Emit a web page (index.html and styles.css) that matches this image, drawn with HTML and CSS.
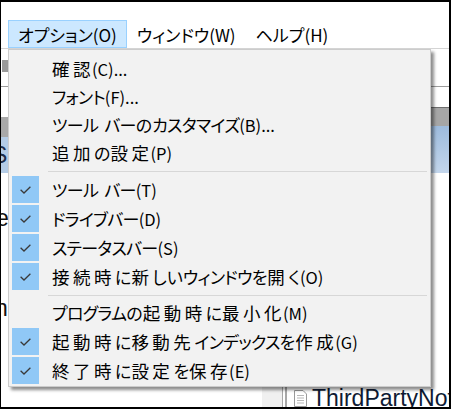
FILE: index.html
```html
<!DOCTYPE html>
<html lang="ja">
<head>
<meta charset="utf-8">
<title>オプション</title>
<link rel="stylesheet" href="styles.css">
</head>
<body>
<div class="frame">
  <div class="titlegap"></div>
  <div class="menubar">
    <div class="mb-item active">オプション(O)</div>
    <div class="mb-item">ウィンドウ(W)</div>
    <div class="mb-item">ヘルプ(H)</div>
  </div>
  <div class="workspace">
    <div class="toolbar"><span class="tb-icon"></span></div>
    <div class="panes">
      <div class="pane-left">
        <div class="pl-top"></div>
        <div class="pl-header"></div>
        <div class="pl-sel"><span class="frag frag-s">S:</span></div>
        <div class="pl-row"></div>
        <div class="pl-row"><span class="frag frag-e">e</span></div>
        <div class="pl-row"></div>
        <div class="pl-row"></div>
        <div class="pl-row"><span class="frag frag-n">n</span></div>
      </div>
      <div class="pane-right">
        <div class="pr-top"></div>
        <div class="pr-header"></div>
        <div class="pr-sel"></div>
        <div class="pr-list">
          <div class="pr-row"></div>
          <div class="pr-row"></div>
          <div class="pr-row"></div>
          <div class="pr-row"></div>
          <div class="pr-row"></div>
          <div class="pr-row"></div>
          <div class="pr-row pr-row-end"><span class="fname">txt</span></div>
          <div class="pr-row"><span class="indent"></span><span class="tree"></span><span class="doc"><svg width="15" height="17" viewBox="0 0 15 17"><path d="M1.5 0.5h8.5l3.5 3.5v12.5h-12z" fill="#fff" stroke="#9a9a9a"/><path d="M4 5.5h7M4 8h7M4 10.5h7M4 13h7" stroke="#b8b8b8"/></svg></span><span class="fname">ThirdPartyNotices.txt</span></div>
        </div>
      </div>
    </div>

    <div class="dropdown">
      <div class="mi"><span class="ic"></span><span class="lb">確<span class="e">認</span><span class="a">(C)...</span></span></div>
      <div class="mi"><span class="ic"></span><span class="lb"><span class="k">フォント</span><span class="a">(F)...</span></span></div>
      <div class="mi"><span class="ic"></span><span class="lb"><span class="k">ツール バー</span><span class="h">の</span><span class="k">カスタマイズ</span><span class="a">(B)...</span></span></div>
      <div class="mi"><span class="ic"></span><span class="lb">追加<span class="h">の</span>設<span class="e">定</span><span class="a">(P)</span></span></div>
      <div class="sep"><span class="line"></span></div>
      <div class="mi checked"><span class="ic"><span class="box"><svg width="11" height="8" viewBox="0 0 11 8"><path d="M0.6 3.8L4 7L10.4 0.8" fill="none" stroke="#3a3a3a" stroke-width="1.3"/></svg></span></span><span class="lb"><span class="k">ツール バー</span><span class="a">(T)</span></span></div>
      <div class="mi checked"><span class="ic"><span class="box"><svg width="11" height="8" viewBox="0 0 11 8"><path d="M0.6 3.8L4 7L10.4 0.8" fill="none" stroke="#3a3a3a" stroke-width="1.3"/></svg></span></span><span class="lb"><span class="k">ドライブバー</span><span class="a">(D)</span></span></div>
      <div class="mi checked"><span class="ic"><span class="box"><svg width="11" height="8" viewBox="0 0 11 8"><path d="M0.6 3.8L4 7L10.4 0.8" fill="none" stroke="#3a3a3a" stroke-width="1.3"/></svg></span></span><span class="lb"><span class="k">ステータスバー</span><span class="a">(S)</span></span></div>
      <div class="mi checked"><span class="ic"><span class="box"><svg width="11" height="8" viewBox="0 0 11 8"><path d="M0.6 3.8L4 7L10.4 0.8" fill="none" stroke="#3a3a3a" stroke-width="1.3"/></svg></span></span><span class="lb">接続時<span class="h">に</span>新<span class="h">しい</span><span class="k">ウィンドウ</span><span class="h">を</span>開<span class="h">く</span><span class="a">(O)</span></span></div>
      <div class="sep"><span class="line"></span></div>
      <div class="mi"><span class="ic"></span><span class="lb"><span class="k">プログラム</span><span class="h">の</span>起動時<span class="h">に</span>最小<span class="e">化</span><span class="a">(M)</span></span></div>
      <div class="mi checked"><span class="ic"><span class="box"><svg width="11" height="8" viewBox="0 0 11 8"><path d="M0.6 3.8L4 7L10.4 0.8" fill="none" stroke="#3a3a3a" stroke-width="1.3"/></svg></span></span><span class="lb">起動時<span class="h">に</span>移動先<span class="k">インデックス</span><span class="h">を</span>作<span class="e">成</span><span class="a">(G)</span></span></div>
      <div class="mi checked"><span class="ic"><span class="box"><svg width="11" height="8" viewBox="0 0 11 8"><path d="M0.6 3.8L4 7L10.4 0.8" fill="none" stroke="#3a3a3a" stroke-width="1.3"/></svg></span></span><span class="lb">終了時<span class="h">に</span>設定<span class="h">を</span>保<span class="e">存</span><span class="a">(E)</span></span></div>
    </div>
  </div>
</div>
</body>
</html>
```

FILE: styles.css
```css
* { box-sizing: border-box; }
html, body { margin: 0; padding: 0; background: #fff; }
body {
  font-family: "Noto Sans CJK JP", sans-serif;
  font-size: 16px;
  color: #000;
}
.frame {
  width: 451px;
  height: 409px;
  border: 2px solid #000;
  border-left-width: 1px;
  background: #fff;
  overflow: hidden;
  display: flex;
  flex-direction: column;
}
.titlegap { height: 18px; flex: none; }
.menubar {
  flex: none;
  height: 29px;
  display: flex;
  padding-left: 7px;
  border-bottom: 1px solid #d4d4d4;
  font-size: 17px;
  font-feature-settings: "palt";
}
.mb-item {
  height: 28px;
  padding: 0 9px;
  border: 1px solid transparent;
  display: flex;
  align-items: center;
  white-space: nowrap;
}
.mb-item.active { background: #cce8ff; border-color: #99d1ff; }

.workspace {
  position: relative;
  flex: 1;
  overflow: hidden;
}
.toolbar {
  height: 38px;
  border-bottom: 1px solid #9c9c9c;
  padding: 11px 0 0 1px;
}
.tb-icon { display: block; width: 14px; height: 12px; background: #9a9a9a; }
.panes {
  display: grid;
  grid-template-columns: 261px 1fr;
}
.frag {
  font-family: "Liberation Sans", Arial, sans-serif;
  font-size: 23px;
  line-height: 30px;
  white-space: nowrap;
  color: #111;
  display: block;
}
.pl-top { height: 30px; }
.pl-header { height: 20px; background: #a9a9a9; }
.pl-sel { height: 36px; background: #b4cce6; padding-top: 3px; }
.pl-row { height: 30px; }
.frag-s { margin-left: -9px; color: #1d2e4a; }
.frag-e { margin-left: -5px; }
.frag-n { margin-left: -6px; }

.pr-top { height: 21px; border-bottom: 1px solid #6e6e6e; }
.pr-header { height: 18px; background: #a6a6a6; }
.pr-sel { height: 47px; background: linear-gradient(#9dbbdd, #c3d6ec); }
.pr-list { padding-top: 15px; }
.pr-row {
  height: 28px;
  display: flex;
  align-items: center;
  white-space: nowrap;
}
.pr-row-end { justify-content: flex-end; padding-right: 9px; }
.indent { align-self: stretch; width: 20px; background: #f0f0f0; flex: none; }
.tree {
  align-self: stretch;
  width: 5px;
  border-left: 1px solid #a8a8a8;
  border-right: 2px solid #a8a8a8;
  margin-right: 6px;
  flex: none;
}
.doc { width: 15px; height: 17px; margin-right: 4px; flex: none; display: flex; }
.fname {
  font-family: "Liberation Sans", Arial, sans-serif;
  font-size: 23px;
  color: #0e1a33;
}

.dropdown {
  position: absolute;
  left: 7px;
  top: 0;
  width: 423px;
  border: 1px solid #cccccc;
  background: #f2f2f2;
  padding: 5px 2px 1px 2px;
  box-shadow: 3px 3px 3px rgba(0, 0, 0, 0.45);
}
.mi {
  height: 28px;
  display: flex;
  align-items: center;
  white-space: nowrap;
}
.mi.checked { height: 29px; }
.lb { font-size: 17.5px; line-height: 24px; letter-spacing: 3.5px; }
.lb .e { letter-spacing: 1.5px; }
.lb .h { font-size: 17px; letter-spacing: 0; font-feature-settings: "palt"; }
.lb .k { font-size: 17px; letter-spacing: -0.7px; word-spacing: 3px; font-feature-settings: "palt"; }
.lb .a { font-size: 16.5px; letter-spacing: 0; }
.ic {
  width: 41px;
  flex: none;
  display: flex;
  align-items: center;
}
.box {
  width: 27px;
  height: 27px;
  margin-left: 1px;
  background: #90c8f6;
  display: flex;
  align-items: center;
  justify-content: center;
}
.box svg { display: block; }
.sep { height: 8px; padding-top: 4px; }
.sep .line { display: block; height: 1px; margin: 0 1px 0 37px; background: #d7d7d7; }
```
